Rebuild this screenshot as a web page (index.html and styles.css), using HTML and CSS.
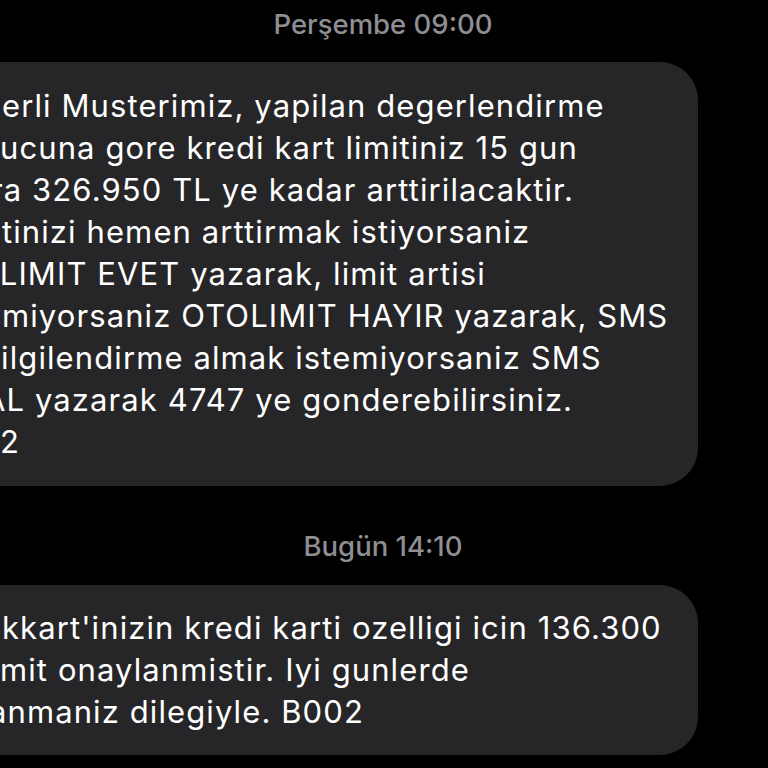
FILE: index.html
```html
<!DOCTYPE html>
<html lang="tr">
<head>
<meta charset="utf-8">
<link rel="stylesheet" href="styles.css">
</head>
<body>
<div class="thread">
  <div class="stamp stamp-first">Perşembe 09:00</div>
  <div class="bubble bubble-first">
    <div class="line ind-1">erli Musterimiz, yapilan degerlendirme</div>
    <div class="line ind-0">ucuna gore kredi kart limitiniz 15 gun</div>
    <div class="line cut-r">ra 326.950 TL ye kadar arttirilacaktir.</div>
    <div class="line ind-1">tinizi hemen arttirmak istiyorsaniz</div>
    <div class="line cut-o">OLIMIT EVET yazarak, limit artisi</div>
    <div class="line ind-1">miyorsaniz OTOLIMIT HAYIR yazarak, SMS</div>
    <div class="line cut-b">bilgilendirme almak istemiyorsaniz SMS</div>
    <div class="line cut-a">AL yazarak 4747 ye gonderebilirsiniz.</div>
    <div class="line ind-0">2</div>
  </div>
  <div class="stamp stamp-second">Bugün 14:10</div>
  <div class="bubble bubble-second">
    <div class="line ind-1">kkart'inizin kredi karti ozelligi icin 136.300</div>
    <div class="line ind-0">mit onaylanmistir. Iyi gunlerde</div>
    <div class="line cut-a2">anmaniz dilegiyle. B002</div>
  </div>
</div>
</body>
</html>
```
FILE: styles.css
```css
html, body {
  margin: 0;
  padding: 0;
  background: #000;
}
body {
  width: 768px;
  height: 768px;
  overflow: hidden;
  font-family: Inter, "Noto Sans", "Liberation Sans", sans-serif;
}
.thread {
  display: flex;
  flex-direction: column;
  padding-top: 8px;
}
.stamp {
  text-align: center;
  color: #8e8e93;
  font-size: 27.5px;
  font-weight: 500;
  line-height: 32px;
  padding-right: 2px;
}
.stamp-second {
  margin-top: 44px;
}
.bubble {
  background: #262628;
  width: 698px;
  box-sizing: border-box;
  border-radius: 0 38px 38px 0;
  overflow: hidden;
}
.bubble-first {
  margin-top: 22px;
  padding: 23px 0;
}
.bubble-second {
  margin-top: 23px;
  padding: 22px 0;
}
.line {
  white-space: nowrap;
  color: #fff;
  font-size: 31px;
  letter-spacing: 1.1px;
  line-height: 42px;
}
.ind-0 { text-indent: 0; }
.ind-1 { text-indent: 2px; }
.cut-r { text-indent: -9px; }
.cut-o { text-indent: -25px; }
.cut-b { text-indent: -19px; }
.cut-a { text-indent: -16px; }
.cut-a2 { text-indent: -11px; }
```
